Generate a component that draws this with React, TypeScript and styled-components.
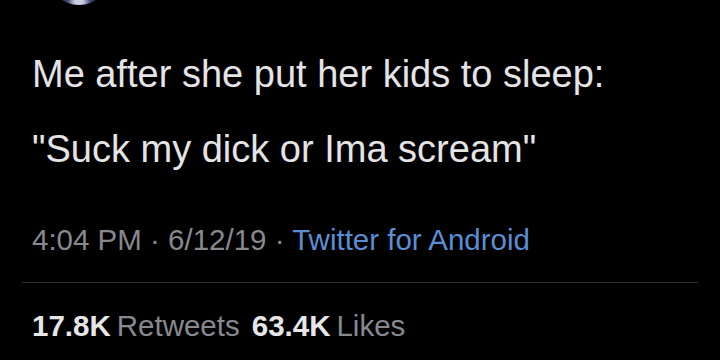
import React from "react";
import styled, { createGlobalStyle } from "styled-components";

const Global = createGlobalStyle`
  html, body { margin: 0; padding: 0; background: #000; }
  body { width: 720px; height: 360px; overflow: hidden; font-family: "Liberation Sans", Arial, sans-serif; }
`;

const Tweet = styled.div`
  width: 720px;
  height: 360px;
  background: #000;
  display: flex;
  flex-direction: column;
  overflow: hidden;
`;

const AvatarRow = styled.div`
  height: 0;
  padding-left: 48px;
`;

const Avatar = styled.div`
  width: 62px;
  height: 62px;
  margin-top: -57px;
  border-radius: 50%;
  background: radial-gradient(circle at 50% 95%, #c9cde0 0 6%, #3a3f66 18%, #141628 45%, #05050a 70%);
`;

const Body = styled.div`
  padding: 37px 0 0 32px;
  display: flex;
  flex-direction: column;
`;

const Line = styled.div`
  color: #e4e4e6;
  font-size: 38px;
  line-height: 75px;
  white-space: nowrap;
`;

const Meta = styled.div`
  padding: 33px 0 0 32px;
  font-size: 29.5px;
  line-height: 40px;
  color: #86898e;
  white-space: nowrap;
`;

const Source = styled.span`
  color: #5a8ed4;
`;

const Divider = styled.div`
  margin: 22px 22px 0 22px;
  height: 1px;
  background: #2e2f33;
`;

const Stats = styled.div`
  padding: 23px 0 0 32px;
  font-size: 29.5px;
  line-height: 40px;
  display: flex;
  gap: 12px;
  white-space: nowrap;
`;

const Stat = styled.span`
  color: #86898e;
`;

const Num = styled.b`
  color: #e6e6e8;
  font-weight: 700;
  margin-right: 6px;
`;

export default function App() {
  return (
    <>
      <Global />
      <Tweet>
        <AvatarRow>
          <Avatar />
        </AvatarRow>
        <Body>
          <Line>Me after she put her kids to sleep:</Line>
          <Line>"Suck my dick or Ima scream"</Line>
        </Body>
        <Meta>
          4:04 PM · 6/12/19 · <Source>Twitter for Android</Source>
        </Meta>
        <Divider />
        <Stats>
          <Stat><Num>17.8K</Num>Retweets</Stat>
          <Stat><Num>63.4K</Num>Likes</Stat>
        </Stats>
      </Tweet>
    </>
  );
}
